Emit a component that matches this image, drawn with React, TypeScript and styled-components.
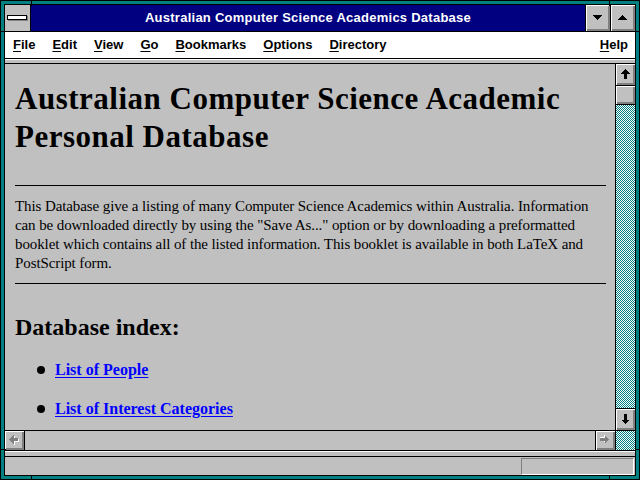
import React from "react";
import styled, { createGlobalStyle } from "styled-components";

const GRAY = "#c0c0c0";
const DARK = "#808080";
const TEAL = "#008080";
const NAVY = "#000080";

const GlobalStyle = createGlobalStyle`
  html, body {
    margin: 0;
    padding: 0;
    background: ${TEAL};
  }
  body {
    width: 640px;
    height: 480px;
    overflow: hidden;
  }
`;

const raised = `
  background: ${GRAY};
  box-shadow: inset 1px 1px #fff, inset -1px -1px ${DARK}, inset -2px -2px ${DARK};
`;

const dither = `
  background-color: #fff;
  background-image: repeating-conic-gradient(${TEAL} 0 25%, #fff 0 50%);
  background-size: 2px 2px;
`;

const Window = styled.div`
  position: relative;
  width: 640px;
  height: 480px;
  box-sizing: border-box;
  border: 1px solid #000;
  padding: 3px;
  background: ${TEAL};
`;

const Tick = styled.div<{ $x: number; $y: number; $w: number; $h: number }>`
  position: absolute;
  left: ${({ $x }) => $x}px;
  top: ${({ $y }) => $y}px;
  width: ${({ $w }) => $w}px;
  height: ${({ $h }) => $h}px;
  background: #000;
`;

const Frame = styled.div`
  height: 100%;
  box-sizing: border-box;
  border: 1px solid #000;
  display: flex;
  flex-direction: column;
  background: ${GRAY};
`;

const TitleBar = styled.div`
  display: flex;
  flex: none;
  height: 27px;
  box-sizing: border-box;
  border-bottom: 1px solid #000;
`;

const SysBox = styled.div`
  width: 26px;
  box-sizing: border-box;
  border-right: 1px solid #000;
  background: ${GRAY};
  display: flex;
  align-items: center;
  justify-content: center;
`;

const SysBar = styled.div`
  width: 20px;
  height: 5px;
  box-sizing: border-box;
  margin: 0 1px 1px 0;
  border: 1px solid #000;
  background: #fff;
  box-shadow: 1px 1px ${DARK};
`;

const Caption = styled.div`
  flex: 1;
  background: ${NAVY};
  color: #fff;
  font-family: "Liberation Sans", Arial, sans-serif;
  font-weight: 700;
  font-size: 13px;
  letter-spacing: 0.25px;
  display: flex;
  align-items: center;
  justify-content: center;
  padding-bottom: 1px;
`;

const TitleButton = styled.div`
  width: 25px;
  box-sizing: border-box;
  border-left: 1px solid #000;
  ${raised}
  display: flex;
  align-items: center;
  justify-content: center;
  padding: 0 1px 1px 0;
`;

const MenuBar = styled.div`
  display: flex;
  flex: none;
  align-items: center;
  gap: 17px;
  height: 27px;
  box-sizing: border-box;
  padding: 0 7px 1px 8px;
  border-bottom: 1px solid #000;
  background: #fff;
  font-family: "Liberation Sans", Arial, sans-serif;
  font-weight: 700;
  font-size: 13px;
  color: #000;
`;

const MenuItem = styled.span<{ $right?: boolean }>`
  margin-left: ${({ $right }) => ($right ? "auto" : "0")};
  u {
    text-underline-offset: 2px;
  }
`;

const Strip = styled.div<{ $h: number }>`
  flex: none;
  height: ${({ $h }) => $h}px;
  box-sizing: border-box;
  border-top: 1px solid #fff;
  border-bottom: 1px solid #000;
  background: ${GRAY};
`;

const Body = styled.div`
  flex: 1;
  min-height: 0;
  display: flex;
`;

const Page = styled.div`
  flex: 1;
  overflow: hidden;
  padding: 0 9px 0 10px;
  background: ${GRAY};
  color: #000;
  font-family: "Liberation Serif", "Times New Roman", serif;
`;

const Heading = styled.h1`
  margin: 16px 0 0;
  font-size: 31px;
  line-height: 38px;
  letter-spacing: 0.5px;
  font-weight: 700;
`;

const Rule = styled.div<{ $gap: number }>`
  margin-top: ${({ $gap }) => $gap}px;
  border-top: 1px solid #000;
`;

const Para = styled.p`
  margin: 11px 0 0;
  font-size: 15px;
  line-height: 19px;
  letter-spacing: -0.1px;
`;

const SubHeading = styled.h2`
  margin: 29px 0 0;
  font-size: 24px;
  line-height: 28px;
  font-weight: 700;
`;

const IndexList = styled.ul`
  list-style: none;
  margin: 19px 0 0;
  padding: 0 0 0 22px;
  display: flex;
  flex-direction: column;
  gap: 19px;
`;

const IndexItem = styled.li`
  display: flex;
  align-items: center;
  gap: 10px;
  height: 20px;
  line-height: 20px;
`;

const Bullet = styled.span`
  width: 8px;
  height: 8px;
  border-radius: 50%;
  background: #000;
`;

const IndexLink = styled.a`
  color: #0000ff;
  font-weight: 700;
  font-size: 16px;
  text-decoration: underline;
  text-underline-offset: 2px;
`;

const VScroll = styled.div`
  width: 20px;
  box-sizing: border-box;
  border-left: 1px solid #000;
  display: flex;
  flex-direction: column;
`;

const ArrowButton = styled.div<{ $edge: "top" | "bottom" | "left" | "right" }>`
  box-sizing: border-box;
  ${raised}
  display: flex;
  align-items: center;
  justify-content: center;
  padding: 0 1px 1px 0;
  border-${({ $edge }) => $edge}: 1px solid #000;
`;

const VButton = styled(ArrowButton)`
  height: 22px;
`;

const Thumb = styled.div`
  height: 19px;
  box-sizing: border-box;
  border-bottom: 1px solid #000;
  ${raised}
`;

const Track = styled.div`
  flex: 1;
  ${dither}
`;

const HScroll = styled.div`
  display: flex;
  flex: none;
  height: 21px;
  box-sizing: border-box;
  border-top: 1px solid #000;
  border-bottom: 1px solid #000;
`;

const HButton = styled(ArrowButton)`
  width: 20px;
`;

const HTrack = styled.div`
  flex: 1;
  background: ${GRAY};
`;

const Corner = styled.div`
  width: 20px;
  box-sizing: border-box;
  border-left: 1px solid #000;
  ${dither}
`;

const StatusBar = styled.div`
  flex: none;
  height: 18px;
  box-sizing: border-box;
  display: flex;
  justify-content: flex-end;
  padding: 1px 1px 0 0;
  background: ${GRAY};
`;

const StatusBox = styled.div`
  width: 113px;
  height: 17px;
  box-sizing: border-box;
  border-top: 1px solid ${DARK};
  border-left: 1px solid ${DARK};
  border-bottom: 1px solid #fff;
  border-right: 1px solid #fff;
`;

const Triangle = ({ up }: { up?: boolean }) => (
  <svg width="9" height="5" viewBox="0 0 9 5" shapeRendering="crispEdges">
    <polygon points={up ? "4.5,0 9,5 0,5" : "0,0 9,0 4.5,5"} fill="#000" />
  </svg>
);

const VArrow = ({ down }: { down?: boolean }) => (
  <svg width="9" height="10" viewBox="0 0 9 10" shapeRendering="crispEdges">
    <polygon
      points="4.5,0 9,4.5 6,4.5 6,10 3,10 3,4.5 0,4.5"
      fill="#000"
      transform={down ? "rotate(180 4.5 5)" : undefined}
    />
  </svg>
);

const HArrow = ({ right }: { right?: boolean }) => (
  <svg width="10" height="10" viewBox="0 0 10 10" shapeRendering="crispEdges">
    <g transform={right ? "rotate(180 4.5 4.5)" : undefined}>
      <polygon points="1,5.5 5.5,1 5.5,4 10,4 10,7 5.5,7 5.5,10" fill="#fff" />
      <polygon points="0,4.5 4.5,0 4.5,3 9,3 9,6 4.5,6 4.5,9" fill={DARK} />
    </g>
  </svg>
);

const menus = ["File", "Edit", "View", "Go", "Bookmarks", "Options", "Directory"];

const ticks = [
  { x: 30, y: 0, w: 1, h: 5 },
  { x: 608, y: 0, w: 1, h: 5 },
  { x: 30, y: 475, w: 1, h: 5 },
  { x: 608, y: 475, w: 1, h: 5 },
  { x: 0, y: 30, w: 5, h: 1 },
  { x: 0, y: 448, w: 5, h: 1 },
  { x: 635, y: 30, w: 5, h: 1 },
  { x: 635, y: 448, w: 5, h: 1 },
];

const App = () => {
  return (
    <>
      <GlobalStyle />
      <Window>
        {ticks.map((t, i) => (
          <Tick key={i} $x={t.x} $y={t.y} $w={t.w} $h={t.h} />
        ))}
        <Frame>
          <TitleBar>
            <SysBox>
              <SysBar />
            </SysBox>
            <Caption>Australian Computer Science Academics Database</Caption>
            <TitleButton>
              <Triangle />
            </TitleButton>
            <TitleButton>
              <Triangle up />
            </TitleButton>
          </TitleBar>

          <MenuBar>
            {menus.map((m) => (
              <MenuItem key={m}>
                <u>{m[0]}</u>
                {m.slice(1)}
              </MenuItem>
            ))}
            <MenuItem $right>
              <u>H</u>elp
            </MenuItem>
          </MenuBar>

          <Strip $h={5} />

          <Body>
            <Page>
              <Heading>Australian Computer Science Academic Personal Database</Heading>
              <Rule $gap={29} />
              <Para>
                This Database give a listing of many Computer Science Academics within
                Australia. Information can be downloaded directly by using the "Save As..."
                option or by downloading a preformatted booklet which contains all of the
                listed information. This booklet is available in both LaTeX and PostScript
                form.
              </Para>
              <Rule $gap={10} />
              <SubHeading>Database index:</SubHeading>
              <IndexList>
                <IndexItem>
                  <Bullet />
                  <IndexLink href="#people">List of People</IndexLink>
                </IndexItem>
                <IndexItem>
                  <Bullet />
                  <IndexLink href="#interests">List of Interest Categories</IndexLink>
                </IndexItem>
              </IndexList>
            </Page>
            <VScroll>
              <VButton $edge="bottom">
                <VArrow />
              </VButton>
              <Thumb />
              <Track />
              <VButton $edge="top">
                <VArrow down />
              </VButton>
            </VScroll>
          </Body>

          <HScroll>
            <HButton $edge="right">
              <HArrow />
            </HButton>
            <HTrack />
            <HButton $edge="left">
              <HArrow right />
            </HButton>
            <Corner />
          </HScroll>

          <Strip $h={6} />

          <StatusBar>
            <StatusBox />
          </StatusBar>
        </Frame>
      </Window>
    </>
  );
};

export default App;
